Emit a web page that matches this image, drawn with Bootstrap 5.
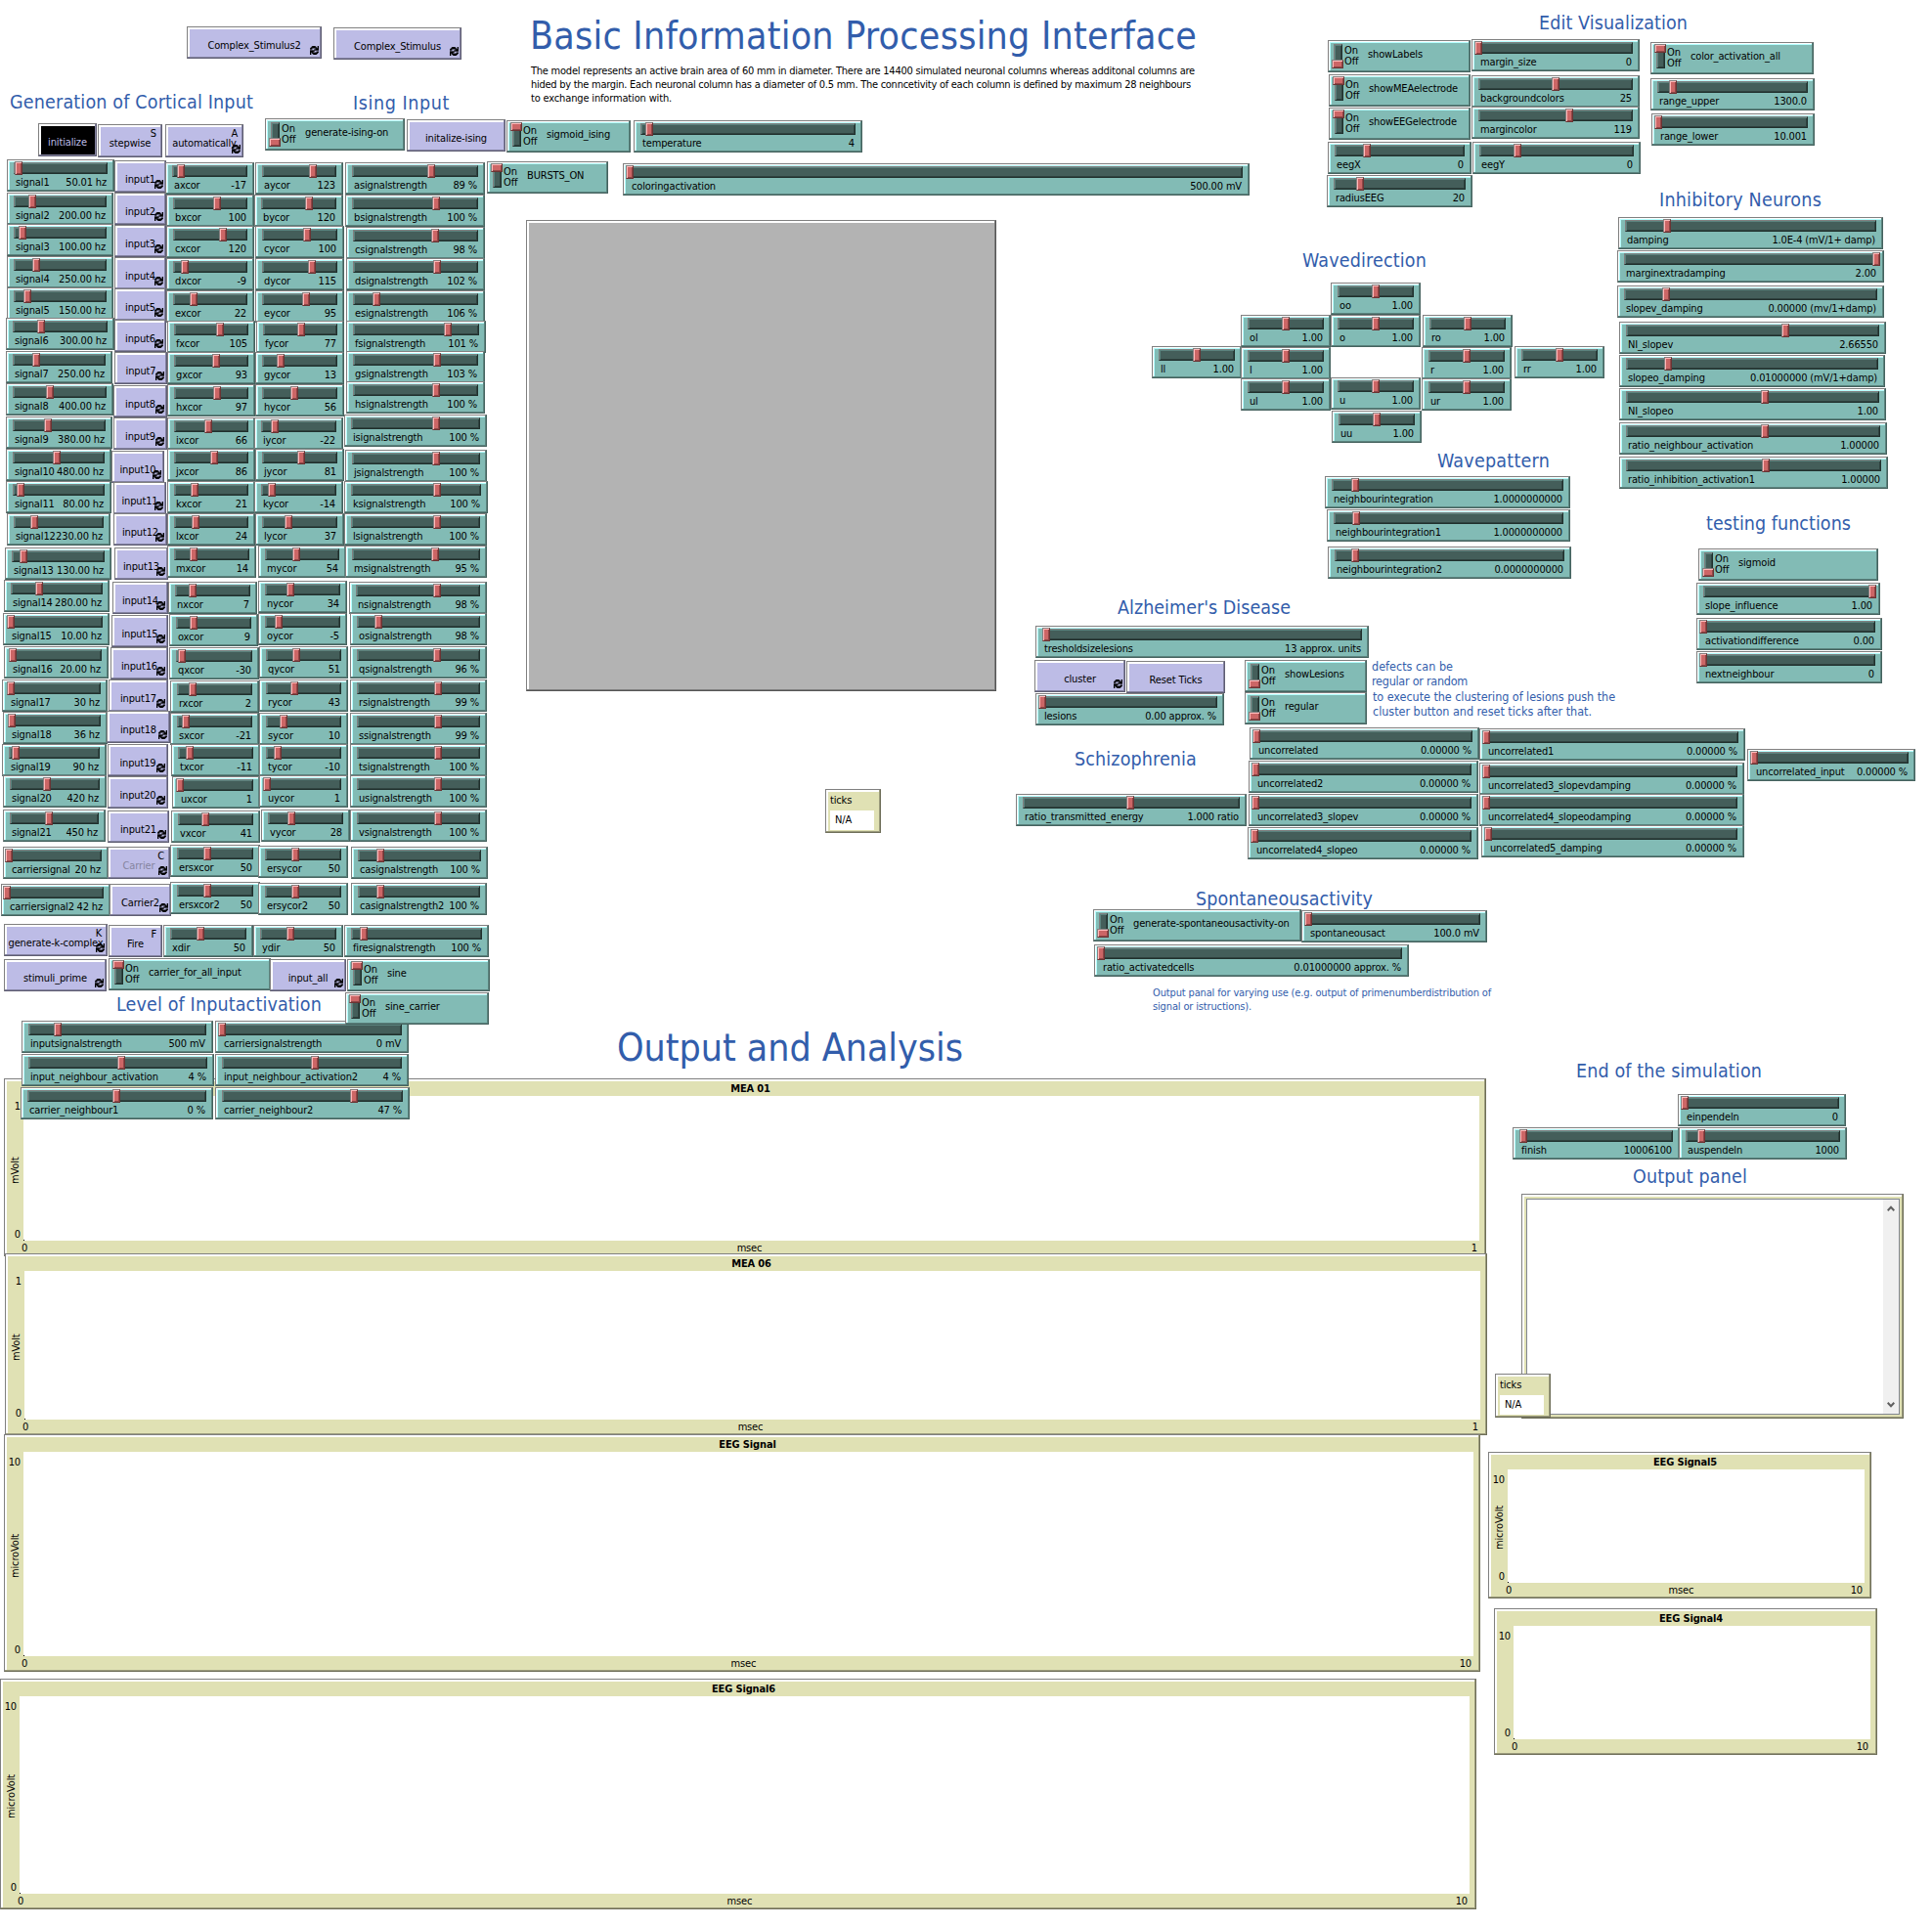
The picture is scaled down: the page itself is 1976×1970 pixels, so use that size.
<!DOCTYPE html>
<html lang="en">
<head>
<meta charset="utf-8">
<title>Basic Information Processing Interface</title>
<link href="https://cdn.jsdelivr.net/npm/bootstrap@5.3.0/dist/css/bootstrap.min.css" rel="stylesheet">
<style>
  body { background:#fff; color:#000; font-family:"DejaVu Sans Condensed","DejaVu Sans",Tahoma,sans-serif; font-stretch:condensed; font-size:11px; line-height:13px; }
  #desk { width:1976px; height:1970px; }
  .wdg { border:1px solid; border-radius:0; white-space:nowrap; letter-spacing:-.15px; }
  .knobbed { background:#82bbb5; border-color:#808080 #45625e #45625e #808080; box-shadow:inset -1px -1px #5b837e, inset 1px 1px #fff, inset 2px 2px #b4ffff; }
  .wdg.push { background:#bdbce6; color:#000; font-size:11px; line-height:13px; border-color:#808080 #5e5d72 #5e5d72 #808080; box-shadow:inset -1px -1px #8483a1, inset 2px 2px #fff; }
  .wdg.push.pressed { background:#000; color:#bdbce6; }
  .push .caption-text { padding-top:5px; }
  .push.idle .caption-text { color:#85849f; }
  .sand { background:#e0e1b4; border-color:#808080 #6e6e58 #6e6e58 #808080; box-shadow:inset -1px -1px #9c9c7d, inset 2px 2px #fff; }
  .groove { background:#445e5a; border:1px solid; border-color:#808080 #20302d #20302d #808080; box-shadow:inset 1px 1px #5b837e, inset -1px -1px #2f423f; }
  .slide-box { padding:2px 6px 0 6px; }
  .slide-box .groove { height:12px; }
  .grip { background:#cc6666; border:1px solid; border-color:#858080 #6b3333 #6b3333 #858080; box-shadow:inset 1px 1px #ffb9b9, inset -1px -1px #8f4747; }
  .slide-box .grip { width:8px; height:14px; top:-2px; margin-left:-5px; }
  .slide-text { padding:2px 1px 0 2px; }
  .toggle-box { padding:3px 0 0 5px; }
  .toggle-box .groove { width:9px; height:23px; }
  .toggle-box .grip { width:12px; height:9px; left:-3px; top:-3px; }
  .toggle-box .grip.down { top:15px; }
  .onoff { line-height:11px; margin-left:2px; padding-top:1px; width:17px; }
  .flag { margin-left:7px; padding-top:4px; }
  .loop { right:2px; bottom:3px; width:9px; height:9px; }
  .hotkey { right:5px; top:2px; }
  .canvas-text { color:#325dab; white-space:pre; }
  .world { background:#b3b3b3; border-color:#808080 #555 #555 #808080; box-shadow:inset -1px -1px #7d7d7d, inset 2px 2px #fff; }
  .plot-grid { display:grid; grid-template:17px 1fr 15px / 19px 1fr 6px; }
  .plot-title { grid-column:2; font-weight:700; padding:3px 2px 0 0; }
  .plot-area { grid-area:2/2; background:#fff; }
  .plot-area::after { content:""; position:absolute; left:0; bottom:0; width:1px; height:1px; background:#000; }
  .plot-y { grid-area:2/1; padding:4px 3px 0 0; }
  .plot-unit { writing-mode:vertical-rl; transform:rotate(180deg); right:2px; top:4px; bottom:0; line-height:13px; }
  .plot-x { grid-area:3/2; padding:1px 2px 0 0; margin-left:-2px; }
  .readout { background:#fff; margin:4px 6px 5px 4px; height:20px; line-height:19px; padding-left:5px; }
  .console { background:#fff; border:1px solid #828790; margin:4px 3px 3px 4px; }
  .scroller { background:#f0f0f0; width:16px; padding:4px 0; }
</style>
<script src="https://cdn.jsdelivr.net/npm/bootstrap@5.3.0/dist/js/bootstrap.bundle.min.js"></script>
</head>
<body>
<svg class="d-none" aria-hidden="true">
  <symbol id="loop" viewBox="0 0 8 8">
    <path stroke="#000" stroke-width=".3" d="M2 0h3v1h1v1h1v-2h1v4h-4v-1h1v-1h-3v1h-2v-1h1v-1h1zM0 4h4v1h-1v1h3v-1h2v1h-1v1h-1v1h-3v-1h-1v-1h-1v2h-1z"/>
  </symbol>
</svg>
<main id="desk" class="position-relative overflow-hidden"></main>
<script>
const desk = document.getElementById('desk');
const H = 33;

function place(html, x, y, r, h) {
  const t = document.createElement('template');
  t.innerHTML = html.trim();
  const el = t.content.firstChild;
  el.classList.add('position-absolute');
  el.style.left = x + 'px';
  el.style.top = y + 'px';
  if (r) el.style.width = (r - x) + 'px';
  if (h) el.style.height = h + 'px';
  desk.append(el);
  return el;
}
// name, value, left, top, right, knob centre
function slider(name, value, x, y, r, knob) {
  place(`<div class="wdg knobbed slide-box">
    <div class="groove position-relative"><div class="grip position-absolute" style="left:${knob - x - 7}px"></div></div>
    <div class="slide-text d-flex justify-content-between"><span>${name}</span><span>${value}</span></div>
  </div>`, x, y, r, H);
}
function button(name, x, y, r, o = {}) {
  place(`<button type="button" class="wdg push btn p-0 d-flex justify-content-center align-items-center ${o.cls || ''}">
    <span class="caption-text">${name}</span>
    ${o.key ? `<span class="hotkey position-absolute">${o.key}</span>` : ''}
    ${o.loop ? '<svg class="loop position-absolute"><use href="#loop"/></svg>' : ''}
  </button>`, x, y, r, o.h || H);
}
function toggle(name, on, x, y, r) {
  place(`<div class="wdg knobbed toggle-box d-flex align-items-start">
    <div class="groove position-relative"><div class="grip position-absolute ${on ? '' : 'down'}"></div></div>
    <div class="onoff">On<br>Off</div><div class="flag">${name}</div>
  </div>`, x, y, r, H);
}
// A line of text on the canvas: baseline at y, spread over the width w
function text(str, x, y, w, size, color) {
  const el = place('<div class="canvas-text"></div>', x, Math.round(y - size / 2 - size * 0.346));
  el.textContent = str;
  el.style.fontSize = size + 'px';
  el.style.lineHeight = size + 'px';
  if (color) el.style.color = color;
  el.style.letterSpacing = ((w - el.getBoundingClientRect().width) / str.length).toFixed(3) + 'px';
}
function plot(title, x, y, r, b, max, xmax, yu, xu) {
  place(`<section class="wdg sand plot-grid">
    <div class="plot-title text-center">${title}</div>
    <div class="plot-y position-relative d-flex flex-column justify-content-between align-items-end"><span>${max}</span><span class="plot-unit position-absolute text-center">${yu}</span><span>0</span></div>
    <div class="plot-area position-relative"></div>
    <div class="plot-x d-flex justify-content-between"><span>0</span><span>${xu}</span><span>${xmax}</span></div>
  </section>`, x, y, r, b - y);
}
function monitor(x, y) {
  place(`<div class="wdg sand"><div class="px-1 pt-1">ticks</div><div class="readout">N/A</div></div>`, x, y, x + 57, 45);
}

plot('MEA 01', 4, 1103, 1520, 1285, '1', '1', 'mVolt', 'msec');
plot('MEA 06', 5, 1282, 1521, 1468, '1', '1', 'mVolt', 'msec');
plot('EEG Signal', 4, 1467, 1514, 1710, '10', '10', 'microVolt', 'msec');
plot('EEG Signal6', 0, 1717, 1510, 1953, '10', '10', 'microVolt', 'msec');
plot('EEG Signal5', 1522, 1485, 1914, 1635, '10', '10', 'microVolt', 'msec');
plot('EEG Signal4', 1528, 1645, 1920, 1795, '10', '10', '', '');
place('<div class="wdg world"></div>', 538, 225, 1019, 482);

place(`<section class="wdg sand d-flex"><div class="console flex-fill d-flex justify-content-end">
  <div class="scroller d-flex flex-column justify-content-between align-items-center">
    <svg width="8" height="10" viewBox="0 0 8 10" fill="none" stroke="#606060" stroke-width="2"><path d="M.7 7.2 4 3.7 7.3 7.2"/></svg>
    <svg width="8" height="10" viewBox="0 0 8 10" fill="none" stroke="#606060" stroke-width="2"><path d="M.7 2.8 4 6.3 7.3 2.8"/></svg>
  </div></div></section>`, 1556, 1221, 1947, 230);
monitor(844, 807);
monitor(1529, 1405);

// Signal generators: value, left, top, right, knob
[['50.01 hz',7,163,117,19],['200.00 hz',7,197,116,33],['100.00 hz',7,229,116,23],['250.00 hz',7,262,116,37],['150.00 hz',7,294,116,28],
 ['300.00 hz',6,325,117,42],['250.00 hz',6,359,115,37],['400.00 hz',6,392,116,51],['380.00 hz',6,426,115,49],['480.00 hz',6,459,114,58],
 ['80.00 hz',6,492,114,21],['230.00 hz',7,525,113,35],['130.00 hz',5,560,114,24],['280.00 hz',4,593,112,40],['10.00 hz',3,627,112,11],
 ['20.00 hz',4,661,111,13],['30 hz',2,695,110,11],['36 hz',3,728,110,12],['90 hz',2,761,109,16],['420 hz',3,793,109,48],['450 hz',3,828,108,50]
].forEach((s, i) => slider('signal' + (i + 1), ...s));
slider('carriersignal', '20 hz', 3, 866, 111, 9);
slider('carriersignal2', '42 hz', 1, 904, 113, 7);

[[117,164,170],[117,197,170],[117,230,170],[117,263,170],[117,295,170],[117,327,170],[117,360,171],[116,394,171],[116,427,171],[114,461,168],
 [116,493,170],[116,525,171],[117,560,172],[115,595,172],[114,629,172],[113,662,172],[111,695,172],[109,727,174],[110,761,172],[110,794,172],[110,829,173]
].forEach((b, i) => button('input' + (i + 1), ...b, { loop: true }));
button('Carrier', 110, 866, 174, { loop: true, key: 'C', cls: 'idle' });
button('Carrier2', 112, 904, 175, { loop: true });

const rows = 'abcdefghijklmnoqrstuv'.split('');
[['-17',169,166,260,185],['100',170,199,260,222],['120',170,231,260,228],['-9',170,264,260,189],['22',170,297,260,198],['105',171,328,261,225],
 ['93',171,360,261,221],['97',171,393,261,222],['66',171,427,261,213],['86',171,459,261,219],['21',171,492,261,199],['24',171,525,261,200],
 ['14',171,558,262,198],['7',172,595,263,197],['9',173,628,264,198],['-30',173,662,265,186],['2',174,696,265,197],['-21',174,729,265,190],
 ['-11',175,761,266,194],['1',176,794,266,184],['41',175,829,266,210]].forEach((s, i) => slider(rows[i] + 'xcor', ...s));
[['123',261,166,351,320],['120',260,199,351,316],['100',261,231,352,314],['115',261,264,352,319],['95',261,297,352,313],['77',262,328,352,308],
 ['13',261,360,352,287],['56',261,393,352,301],['-22',260,427,351,281],['81',261,459,352,308],['-14',260,492,351,278],['37',261,525,352,295],
 ['54',264,558,354,303],['34',264,594,355,297],['-5',264,627,355,285],['51',265,661,356,303],['43',265,695,356,301],['10',265,729,356,290],
 ['-10',265,761,356,284],['1',265,793,356,273],['28',267,828,358,298]].forEach((s, i) => slider(rows[i] + 'ycor', ...s));
[['89 %',353,166,496,441],['100 %',353,199,496,446],['98 %',354,232,496,445],['102 %',354,264,496,447],['106 %',354,297,496,385],['101 %',354,328,497,458],
 ['103 %',354,359,496,447],['100 %',354,390,496,446],['100 %',352,424,498,446],['100 %',353,460,498,446],['100 %',352,492,499,447],['100 %',352,525,498,447],
 ['95 %',353,558,498,445],['98 %',357,595,498,447],['98 %',358,627,498,387],['96 %',358,661,498,447],['99 %',358,695,498,448],['99 %',358,729,498,448],
 ['100 %',358,761,498,448],['100 %',358,793,498,448],['100 %',358,828,498,448]].forEach((s, i) => slider(rows[i] + 'signalstrength', ...s));
slider('ersxcor', '50', 174, 864, 266, 212);
slider('ersycor', '50', 264, 865, 356, 302);
slider('casignalstrength', '100 %', 359, 866, 499, 389);
slider('ersxcor2', '50', 174, 902, 266, 212);
slider('ersycor2', '50', 264, 903, 356, 302);
slider('casignalstrength2', '100 %', 359, 903, 498, 389);

button('Complex_Stimulus2', 191, 27, 329, { loop: true });
button('Complex_Stimulus', 341, 28, 472, { loop: true });
button('initialize', 39, 126, 99, { cls: 'pressed', h: 34 });
button('stepwise', 100, 127, 166, { key: 'S', h: 34 });
button('automatically', 169, 127, 249, { key: 'A', loop: true, h: 34 });
button('initalize-ising', 416, 122, 517);
toggle('generate-ising-on', false, 271, 121, 414);
toggle('sigmoid_ising', true, 518, 123, 645);
slider('temperature', '4', 648, 123, 882, 664);
toggle('BURSTS_ON', true, 498, 165, 622);
slider('coloringactivation', '500.00 mV', 637, 167, 1278, 644);

button('generate-k-complex', 4, 945, 110, { key: 'K', loop: true });
button('Fire', 111, 946, 166, { key: 'F' });
slider('xdir', '50', 167, 946, 259, 205);
slider('ydir', '50', 259, 946, 351, 297);
slider('firesignalstrength', '100 %', 352, 946, 500, 372);
button('stimuli_prime', 4, 981, 109, { loop: true });
toggle('carrier_for_all_input', true, 111, 980, 277);
button('input_all', 276, 981, 354, { loop: true });
toggle('sine', true, 355, 981, 501);

slider('inputsignalstrength', '500 mV', 22, 1044, 218, 59);
slider('carriersignalstrength', '0 mV', 220, 1044, 418, 227);
slider('input_neighbour_activation', '4 %', 22, 1078, 219, 124);
slider('input_neighbour_activation2', '4 %', 220, 1078, 418, 322);
slider('carrier_neighbour1', '0 %', 21, 1112, 218, 119);
slider('carrier_neighbour2', '47 %', 220, 1112, 419, 362);
toggle('sine_carrier', true, 353, 1015, 500);

toggle('showLabels', false, 1358, 41, 1504);
toggle('showMEAelectrode', true, 1359, 76, 1504);
toggle('showEEGelectrode', true, 1359, 110, 1504);
slider('margin_size', '0', 1505, 40, 1677, 1512);
slider('backgroundcolors', '25', 1505, 77, 1677, 1591);
slider('margincolor', '119', 1505, 109, 1677, 1605);
slider('eegX', '0', 1358, 145, 1505, 1398);
slider('eegY', '0', 1506, 145, 1678, 1552);
slider('radiusEEG', '20', 1357, 179, 1506, 1391);
toggle('color_activation_all', true, 1688, 43, 1855);
slider('range_upper', '1300.0', 1688, 80, 1856, 1711);
slider('range_lower', '10.001', 1689, 116, 1856, 1696);

slider('damping', '1.0E-4 (mV/1+ damp)', 1655, 222, 1926, 1705);
slider('marginextradamping', '2.00', 1654, 256, 1927, 1919);
slider('slopev_damping', '0.00000 (mv/1+damp)', 1654, 292, 1927, 1704);
slider('NI_slopev', '2.66550', 1656, 329, 1929, 1826);
slider('slopeo_damping', '0.01000000 (mV/1+damp)', 1656, 363, 1928, 1706);
slider('NI_slopeo', '1.00', 1656, 397, 1929, 1805);
slider('ratio_neighbour_activation', '1.00000', 1656, 432, 1930, 1805);
slider('ratio_inhibition_activation1', '1.00000', 1656, 467, 1931, 1806);

[['oo',1361,289],['ol',1269,322],['o',1361,322],['ro',1455,322],['ll',1178,354],['l',1269,355],['r',1454,355],['rr',1549,354],
 ['ul',1269,387],['u',1361,386],['ur',1454,387],['uu',1362,420]].forEach(([n, x, y]) => slider(n, '1.00', x, y, x + 92, x + 46));

slider('neighbourintegration', '1.0000000000', 1355, 487, 1606, 1386);
slider('neighbourintegration1', '1.0000000000', 1357, 521, 1606, 1387);
slider('neighbourintegration2', '0.0000000000', 1358, 559, 1607, 1386);
toggle('sigmoid', false, 1737, 561, 1921);
slider('slope_influence', '1.00', 1735, 596, 1923, 1915);
slider('activationdifference', '0.00', 1735, 632, 1925, 1742);
slider('nextneighbour', '0', 1735, 666, 1925, 1742);

slider('tresholdsizelesions', '13 approx. units', 1059, 640, 1400, 1070);
button('cluster', 1058, 675, 1151, { loop: true });
button('Reset Ticks', 1152, 676, 1253);
slider('lesions', '0.00 approx. %', 1059, 709, 1252, 1066);
toggle('showLesions', false, 1273, 675, 1398);
toggle('regular', false, 1273, 708, 1398);
slider('ratio_transmitted_energy', '1.000 ratio', 1039, 812, 1275, 1156);
slider('uncorrelated', '0.00000 %', 1278, 744, 1513, 1285);
slider('uncorrelated2', '0.00000 %', 1277, 778, 1512, 1284);
slider('uncorrelated3_slopev', '0.00000 %', 1277, 812, 1512, 1284);
slider('uncorrelated4_slopeo', '0.00000 %', 1276, 846, 1512, 1283);
slider('uncorrelated1', '0.00000 %', 1513, 745, 1785, 1520);
slider('uncorrelated3_slopevdamping', '0.00000 %', 1513, 780, 1784, 1520);
slider('uncorrelated4_slopeodamping', '0.00000 %', 1513, 812, 1784, 1520);
slider('uncorrelated5_damping', '0.00000 %', 1515, 844, 1784, 1522);
slider('uncorrelated_input', '0.00000 %', 1787, 766, 1959, 1794);

toggle('generate-spontaneousactivity-on', false, 1118, 930, 1331);
slider('spontaneousact', '100.0 mV', 1331, 931, 1521, 1338);
slider('ratio_activatedcells', '0.01000000 approx. %', 1119, 966, 1441, 1126);
slider('einpendeln', '0', 1716, 1119, 1888, 1723);
slider('finish', '10006100', 1547, 1153, 1718, 1558);
slider('auspendeln', '1000', 1717, 1153, 1889, 1740);

text('Basic Information Processing Interface', 542, 50, 682, 39);
text('Output and Analysis', 631, 1085, 354, 39);
[['Generation of Cortical Input',10,111,249],['Ising Input',361,112,99],['Edit Visualization',1574,30,152],['Inhibitory Neurons',1697,211,166],
 ['Wavedirection',1332,273,127],['Wavepattern',1470,478,115],['testing functions',1745,542,148],["Alzheimer's Disease",1143,628,177],
 ['Schizophrenia',1099,783,125],['Spontaneousactivity',1223,926,181],['End of the simulation',1612,1102,190],['Output panel',1670,1210,117],
 ['Level of Inputactivation',119,1034,210]].forEach(([s, x, y, w]) => text(s, x, y, w, 19.5));
text('The model represents an active brain area of 60 mm in diameter. There are 14400 simulated neuronal columns whereas additonal columns are', 543, 76, 679, 11, '#000');
text('hided by the margin. Each neuronal column has a diameter of 0.5 mm. The conncetivity of each column is defined by maximum 28 neighbours', 543, 90, 675, 11, '#000');
text('to exchange information with.', 543, 104, 144, 11, '#000');
text('defects can be', 1403, 687, 83, 12.5);
text('regular or random', 1403, 702, 98, 12.5);
text('to execute the clustering of lesions push the', 1404, 718, 248, 12.5);
text('cluster button and reset ticks after that.', 1404, 733, 224, 12.5);
text('Output panal for varying use (e.g. output of primenumberdistribution of', 1179, 1019, 346, 11);
text('signal or istructions).', 1179, 1033, 101, 11);
</script>
</body>
</html>
